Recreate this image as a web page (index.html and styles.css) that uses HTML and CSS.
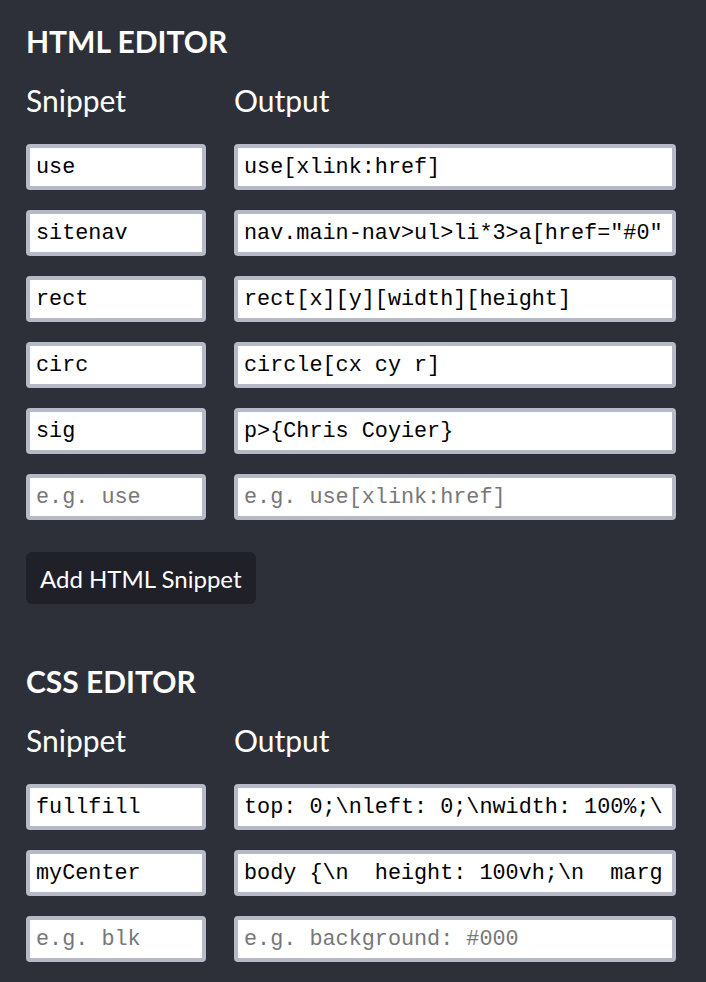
FILE: index.html
```html
<!DOCTYPE html>
<html lang="en">
<head>
    <meta charset="UTF-8">
    <meta name="viewport" content="width=device-width, initial-scale=1.0">
    <title>Snippet Editor</title>
    <link rel="stylesheet" href="styles.css">
</head>
<body>
    <section class="editor">
        <h2>HTML EDITOR</h2>
        <div class="labels">
            <span>Snippet</span>
            <span>Output</span>
        </div>
        <div class="rows">
            <div class="row">
                <input type="text" value="use">
                <input type="text" value="use[xlink:href]">
            </div>
            <div class="row">
                <input type="text" value="sitenav">
                <input type="text" value='nav.main-nav>ul>li*3>a[href="#0"]'>
            </div>
            <div class="row">
                <input type="text" value="rect">
                <input type="text" value="rect[x][y][width][height]">
            </div>
            <div class="row">
                <input type="text" value="circ">
                <input type="text" value="circle[cx cy r]">
            </div>
            <div class="row">
                <input type="text" value="sig">
                <input type="text" value="p>{Chris Coyier}">
            </div>
            <div class="row">
                <input type="text" placeholder="e.g. use">
                <input type="text" placeholder="e.g. use[xlink:href]">
            </div>
        </div>
        <button type="button" class="add-btn">Add HTML Snippet</button>
    </section>

    <section class="editor css-editor">
        <h2>CSS EDITOR</h2>
        <div class="labels">
            <span>Snippet</span>
            <span>Output</span>
        </div>
        <div class="rows">
            <div class="row">
                <input type="text" value="fullfill">
                <input type="text" value="top: 0;\nleft: 0;\nwidth: 100%;\nheight: 100%;">
            </div>
            <div class="row">
                <input type="text" value="myCenter">
                <input type="text" value="body {\n  height: 100vh;\n  margin: 0;\n}">
            </div>
            <div class="row">
                <input type="text" placeholder="e.g. blk">
                <input type="text" placeholder="e.g. background: #000">
            </div>
        </div>
    </section>
</body>
</html>
```

FILE: styles.css
```css
body {
    margin: 0;
    padding: 23px 26px;
    background-color: #2d3039;
    color: #fff;
    font-family: 'Lato', 'Noto Sans', sans-serif;
}

h2 {
    margin: 0 0 23px;
    font-size: 30px;
    font-weight: 700;
    line-height: 1.2;
}

.css-editor {
    margin-top: 59px;
}

.labels,
.row {
    display: grid;
    grid-template-columns: 180px 442px;
    column-gap: 28px;
}

.labels {
    font-size: 30px;
    line-height: 1.2;
    margin-bottom: 26px;
}

.rows {
    display: flex;
    flex-direction: column;
    gap: 20px;
}

.row input {
    box-sizing: border-box;
    width: 100%;
    height: 46px;
    margin: 0;
    padding: 0 9px 0 6px;
    border: 4px solid #b6b9c6;
    border-radius: 4px;
    background: #fff;
    color: #000;
    font-family: 'Liberation Mono', 'Courier New', monospace;
    font-size: 21.8px;
    outline: none;
}

.row input::placeholder {
    color: #777;
}

.add-btn {
    margin-top: 32px;
    height: 52px;
    padding: 0 14px;
    border: none;
    border-radius: 6px;
    background-color: #1f2028;
    color: #fff;
    font-family: 'Lato', 'Noto Sans', sans-serif;
    font-size: 24px;
    cursor: pointer;
}
```
